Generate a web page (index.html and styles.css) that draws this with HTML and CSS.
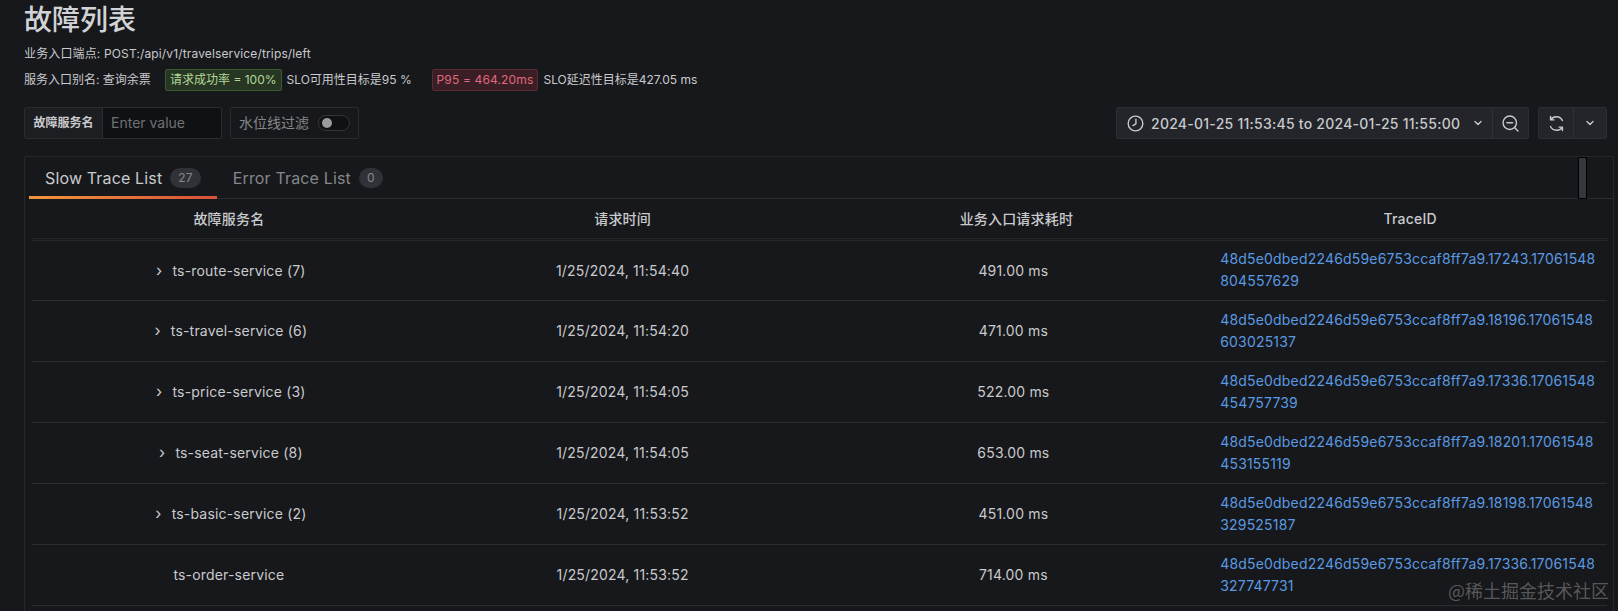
FILE: index.html
```html
<!DOCTYPE html>
<html lang="en">
<head>
    <meta charset="UTF-8">
    <meta name="viewport" content="width=device-width, initial-scale=1.0">
    <title>故障列表</title>
    <link rel="stylesheet" href="styles.css">
</head>
<body>
    <header class="page-head">
        <h1 class="page-title">故障列表</h1>
        <p class="info-line">业务入口端点: POST:/api/v1/travelservice/trips/left</p>
        <div class="info-line info-badges">
            <span class="alias">服务入口别名: 查询余票</span>
            <span class="badge badge-ok">请求成功率 = 100%</span>
            <span class="slo slo-first">SLO可用性目标是95 %</span>
            <span class="badge badge-bad">P95 = 464.20ms</span>
            <span class="slo">SLO延迟性目标是427.05 ms</span>
        </div>
    </header>

    <section class="toolbar">
        <div class="filter">
            <label class="filter-label">故障服务名</label>
            <span class="filter-input">Enter value</span>
        </div>
        <div class="switch-box">
            <span>水位线过滤</span>
            <span class="switch"><span class="switch-knob"></span></span>
        </div>
        <div class="spacer"></div>
        <div class="time-picker">
            <button class="tool-btn time-range">
                <svg class="icon" viewBox="0 0 16 16"><circle cx="8" cy="8" r="6.9"/><path d="M8.4 4v4.3L5.6 10"/></svg>
                <span>2024-01-25 11:53:45 to 2024-01-25 11:55:00</span>
                <svg class="icon-small" viewBox="0 0 10 10"><path d="M2 3.5 5 6.5 8 3.5"/></svg>
            </button>
            <button class="tool-btn zoom-btn">
                <svg class="icon" viewBox="0 0 16 16"><circle cx="7.3" cy="7.3" r="6.3"/><path d="M4.6 7.3h5.4M11.8 11.8 15 15"/></svg>
            </button>
        </div>
        <div class="refresh">
            <button class="tool-btn sync-btn">
                <svg class="icon" viewBox="0 0 16 16"><path d="M13.6 5.2A6.4 6.4 0 0 0 2.6 4.4M2.4 1.4v3.2h3.2M2.4 10.8a6.4 6.4 0 0 0 11 .8M13.6 14.6v-3.2h-3.2"/></svg>
            </button>
            <button class="tool-btn caret-btn">
                <svg class="icon-small" viewBox="0 0 10 10"><path d="M2 3.5 5 6.5 8 3.5"/></svg>
            </button>
        </div>
    </section>

    <section class="panel">
        <div class="tabs">
            <div class="tab tab-active">Slow Trace List <span class="counter">27</span></div>
            <div class="tab">Error Trace List <span class="counter counter-small">0</span></div>
            <div class="tabs-thumb"></div>
        </div>
        <table class="trace-table">
            <thead>
                <tr>
                    <th>故障服务名</th>
                    <th>请求时间</th>
                    <th>业务入口请求耗时</th>
                    <th>TraceID</th>
                </tr>
            </thead>
            <tbody>
                <tr>
                    <td><span class="chevron">›</span>ts-route-service (7)</td>
                    <td>1/25/2024, 11:54:40</td>
                    <td class="duration">491.00 ms</td>
                    <td class="trace-id"><a href="#">48d5e0dbed2246d59e6753ccaf8ff7a9.17243.17061548804557629</a></td>
                </tr>
                <tr>
                    <td><span class="chevron">›</span>ts-travel-service (6)</td>
                    <td>1/25/2024, 11:54:20</td>
                    <td class="duration">471.00 ms</td>
                    <td class="trace-id"><a href="#">48d5e0dbed2246d59e6753ccaf8ff7a9.18196.17061548603025137</a></td>
                </tr>
                <tr>
                    <td><span class="chevron">›</span>ts-price-service (3)</td>
                    <td>1/25/2024, 11:54:05</td>
                    <td class="duration">522.00 ms</td>
                    <td class="trace-id"><a href="#">48d5e0dbed2246d59e6753ccaf8ff7a9.17336.17061548454757739</a></td>
                </tr>
                <tr>
                    <td><span class="chevron">›</span>ts-seat-service (8)</td>
                    <td>1/25/2024, 11:54:05</td>
                    <td class="duration">653.00 ms</td>
                    <td class="trace-id"><a href="#">48d5e0dbed2246d59e6753ccaf8ff7a9.18201.17061548453155119</a></td>
                </tr>
                <tr>
                    <td><span class="chevron">›</span>ts-basic-service (2)</td>
                    <td>1/25/2024, 11:53:52</td>
                    <td class="duration">451.00 ms</td>
                    <td class="trace-id"><a href="#">48d5e0dbed2246d59e6753ccaf8ff7a9.18198.17061548329525187</a></td>
                </tr>
                <tr>
                    <td>ts-order-service</td>
                    <td>1/25/2024, 11:53:52</td>
                    <td class="duration">714.00 ms</td>
                    <td class="trace-id"><a href="#">48d5e0dbed2246d59e6753ccaf8ff7a9.17336.17061548327747731</a></td>
                </tr>
            </tbody>
        </table>
    </section>

    <div class="watermark">@稀土掘金技术社区</div>
</body>
</html>
```

FILE: styles.css
```css
* {
    box-sizing: border-box;
}

html,
body {
    height: 100%;
}

body {
    margin: 0;
    padding: 0 4px 0 24px;
    overflow: hidden;
    position: relative;
    background-color: #17181b;
    color: #c9cacd;
    font-family: Inter, "Noto Sans CJK SC", sans-serif;
    font-size: 14px;
}

.page-title {
    margin: 0;
    height: 38px;
    padding-top: 1px;
    font-size: 28px;
    line-height: 38px;
    font-weight: 500;
    color: #d2d3d6;
}

.info-line {
    margin: 0;
    font-size: 12px;
    line-height: 16px;
    color: #c9cacd;
}

.page-head > p.info-line {
    margin-top: 8px;
    letter-spacing: 0.14px;
}

.info-badges {
    display: flex;
    align-items: center;
    height: 22px;
    margin-top: 7px;
}

.alias {
    width: 141px;
}

.badge {
    height: 22px;
    line-height: 20px;
    padding: 0 4px;
    border: 1px solid;
    border-radius: 2px;
}

.badge-ok {
    background-color: #263623;
    border-color: #3a5a30;
    color: #b4d69a;
}

.badge-bad {
    background-color: #391f25;
    border-color: #5c2a35;
    color: #e0687f;
    letter-spacing: 0.15px;
}

.slo {
    margin-left: 5px;
}

.slo-first {
    width: 145px;
}

.toolbar {
    display: flex;
    align-items: stretch;
    height: 32px;
    margin-top: 16px;
    margin-right: 7px;
}

.filter {
    display: flex;
    width: 198px;
    border: 1px solid #2a2c30;
    border-radius: 2px;
}

.filter-label {
    width: 78px;
    background-color: #1c1e22;
    border-right: 1px solid #2a2c30;
    text-align: center;
    font-size: 12px;
    font-weight: 600;
    line-height: 29px;
}

.filter-input {
    flex: 1;
    padding-left: 8px;
    background-color: #101114;
    color: #6f7175;
    line-height: 29px;
}

.switch-box {
    display: flex;
    align-items: center;
    justify-content: space-between;
    width: 129px;
    margin-left: 8px;
    padding: 0 8px;
    border: 1px solid #2a2c30;
    border-radius: 2px;
    color: #85878b;
    line-height: 28px;
}

.switch {
    display: block;
    width: 32px;
    height: 16px;
    padding: 2px 3px;
    border: 1px solid #34363a;
    border-radius: 8px;
    background-color: #101114;
}

.switch-knob {
    display: block;
    width: 10px;
    height: 10px;
    border-radius: 50%;
    background-color: #9a9b9e;
}

.spacer {
    flex: 1;
}

.time-picker,
.refresh {
    display: flex;
    border: 1px solid #2c2e33;
    border-radius: 2px;
    background-color: #23252a;
}

.refresh {
    margin-left: 9px;
}

.tool-btn {
    display: flex;
    align-items: center;
    height: 100%;
    padding: 0;
    border: none;
    background: none;
    color: #c9cacd;
    font-family: inherit;
    font-size: 14px;
    font-weight: 500;
    letter-spacing: 0.25px;
}

.time-range {
    width: 376px;
    padding-left: 10px;
    border-right: 1px solid #2f3136;
}

.time-range span {
    margin: 0 13px 0 7px;
    white-space: nowrap;
}

.zoom-btn {
    width: 35px;
    justify-content: center;
}

.sync-btn {
    width: 35px;
    justify-content: center;
    border-right: 1px solid #2f3136;
}

.caret-btn {
    width: 32px;
    justify-content: center;
}

.icon,
.icon-small {
    flex: none;
    fill: none;
    stroke: #c9cacd;
    stroke-linecap: round;
    stroke-linejoin: round;
}

.icon {
    width: 17px;
    height: 17px;
    stroke-width: 1.3;
}

.icon-small {
    width: 10px;
    height: 10px;
    stroke-width: 1.4;
}

.panel {
    height: 470px;
    margin-top: 17px;
    padding: 0 13px 0 0;
    border: 1px solid #26282c;
    border-radius: 2px;
}

.tabs {
    display: flex;
    position: relative;
    height: 42px;
    margin-left: 4px;
    margin-right: -13px;
    border-bottom: 1px solid #2a2c30;
}

.tab {
    display: flex;
    align-items: center;
    height: 42px;
    padding: 0 16px;
    font-size: 16px;
    letter-spacing: 0.15px;
    color: #85878b;
}

.tab-active {
    color: #c9cacd;
    padding-top: 3px;
    border-bottom: 3px solid;
    border-image: linear-gradient(90deg, #f2963c, #d8513a) 1;
}

.counter {
    display: block;
    margin-left: 8px;
    padding: 0 8px;
    border-radius: 10px;
    background-color: #303238;
    color: #85878b;
    font-size: 12px;
    line-height: 20px;
}

/* overlay scrollbar thumb, sits on the tab strip */
.tabs-thumb {
    position: absolute;
    top: 0;
    right: 26px;
    width: 9px;
    height: 42px;
    border: 1px solid #000;
    background-color: #35373c;
}

.trace-table {
    width: 100%;
    margin-left: 7px;
    table-layout: fixed;
    border-collapse: collapse;
    letter-spacing: 0.18px;
}

.trace-table th {
    height: 40px;
    font-size: 14px;
    font-weight: 500;
    color: #c9cacd;
    border-bottom: 3px double #26282c;
}

.trace-table td {
    height: 61px;
    padding: 0 8px;
    text-align: center;
    border-bottom: 1px solid #2a2c30;
}

.chevron {
    margin-left: 4px;
    margin-right: 10px;
    font-size: 16px;
    line-height: 1;
}

.trace-table td.duration {
    padding-right: 14px;
}

.trace-table td.trace-id {
    padding-left: 7px;
    text-align: left;
    line-height: 22px;
    word-break: break-all;
}

.trace-id a {
    color: #5a9ae2;
    text-decoration: none;
}

.watermark {
    position: absolute;
    right: 9px;
    bottom: 8px;
    font-size: 18px;
    font-family: "Noto Sans CJK SC", sans-serif;
    color: rgba(170, 170, 170, 0.45);
}
```
